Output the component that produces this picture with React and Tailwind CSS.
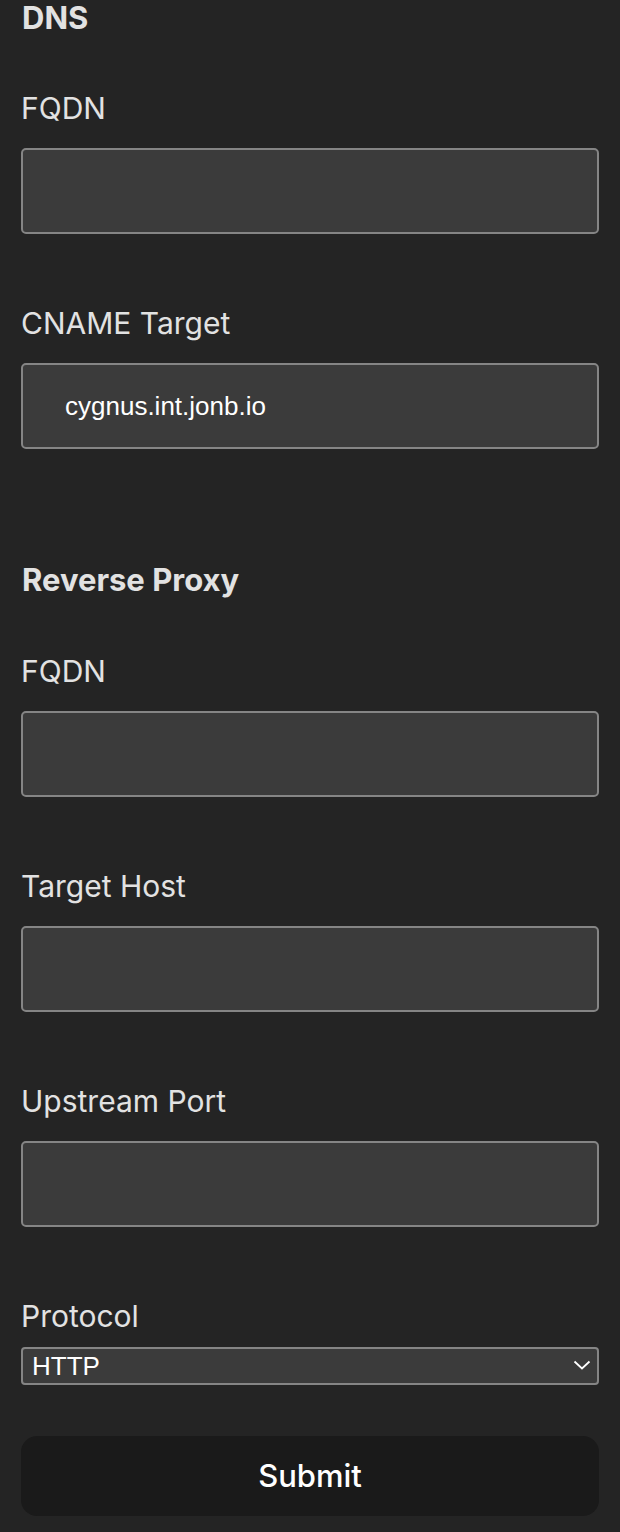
import React from 'react'

function Field({ label, value }) {
  return (
    <div className="flex flex-col">
      <label className="text-[30px] leading-[40px] text-[#e2e2e2] mb-5">{label}</label>
      <input
        readOnly
        value={value || ''}
        className="h-[86px] w-full rounded-[5px] border-2 border-[#858585] bg-[#3b3b3b] pl-[42px] text-[26px] text-white outline-none font-['Liberation_Sans',Arial,sans-serif]"
      />
    </div>
  )
}

export default function App() {
  return (
    <div className="min-h-[1532px] bg-[#242424] px-[21px] font-['Inter','Noto_Sans',sans-serif]">
      <h2 className="pl-px text-[31px] leading-[36px] font-bold text-[#e2e2e2]">DNS</h2>
      <div className="mt-[52px] flex flex-col gap-[69px]">
        <Field label="FQDN" />
        <Field label="CNAME Target" value="cygnus.int.jonb.io" />
      </div>

      <h2 className="mt-[113px] pl-px text-[31px] leading-[36px] font-bold text-[#e2e2e2]">Reverse Proxy</h2>
      <div className="mt-[53px] flex flex-col gap-[69px]">
        <Field label="FQDN" />
        <Field label="Target Host" />
        <Field label="Upstream Port" />
        <div className="flex flex-col">
          <label className="text-[30px] leading-[40px] text-[#e2e2e2] mb-[11px]">Protocol</label>
          <div className="relative">
            <select
              defaultValue="HTTP"
              className="h-[38px] w-full appearance-none rounded-[4px] border-2 border-[#858585] bg-[#3b3b3b] pl-[9px] text-[26px] leading-[30px] text-white outline-none font-['Liberation_Sans',Arial,sans-serif]"
            >
              <option>HTTP</option>
              <option>HTTPS</option>
            </select>
            <svg
              className="pointer-events-none absolute right-[8px] top-[12px]"
              width="18"
              height="12"
              viewBox="0 0 18 12"
              fill="none"
              stroke="white"
              strokeWidth="1.8"
            >
              <path d="M1.5 2.5 L9 9.5 L16.5 2.5" />
            </svg>
          </div>
        </div>
      </div>

      <button className="mt-[51px] flex h-[80px] w-full items-center justify-center rounded-[16px] bg-[#1a1a1a] text-[31px] font-medium text-white">
        Submit
      </button>
    </div>
  )
}
